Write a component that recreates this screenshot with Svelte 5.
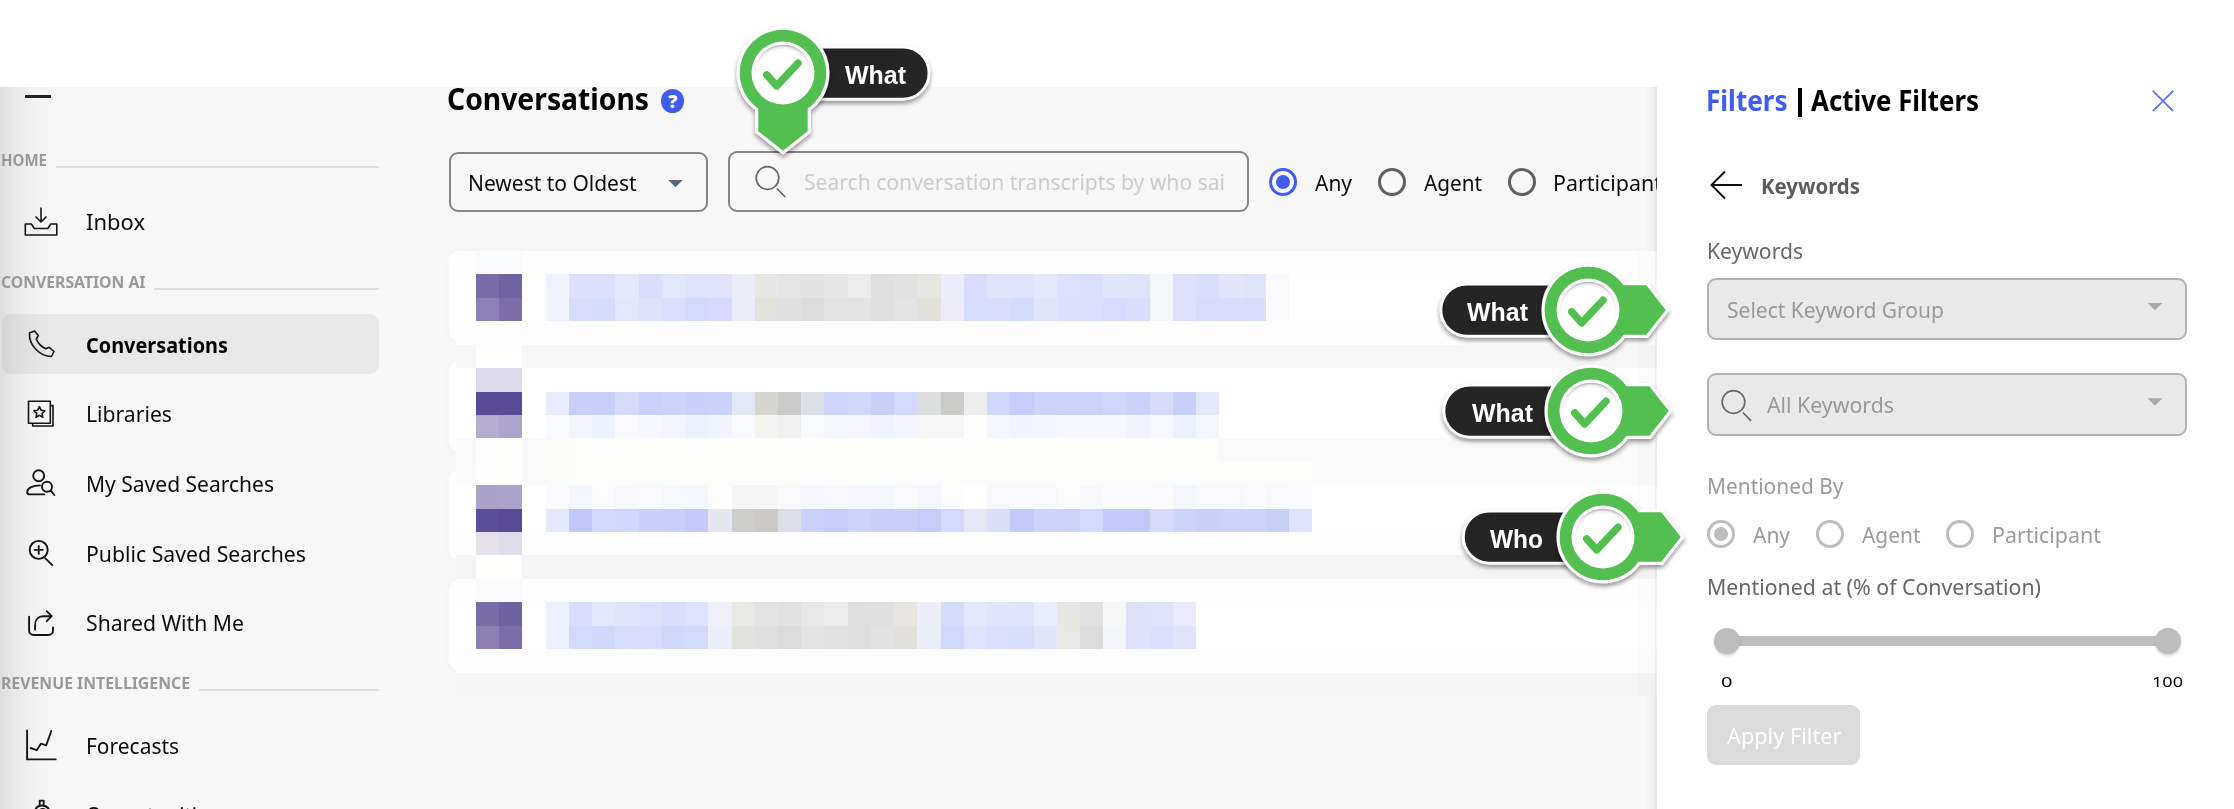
<script>
  // Condenses a line of text to a given width in pixels.
  function fit(node, width) {
    const natural = node.getBoundingClientRect().width;
    node.style.transform = `scaleX(${width / natural})`;
    node.style.marginRight = `${width - natural}px`;
  }

  const sections = [
    { title: 'HOME', w: 46, items: [{ label: 'Inbox', w: 59, icon: 'inbox' }] },
    {
      title: 'CONVERSATION AI', w: 144.5,
      items: [
        { label: 'Conversations', w: 142, icon: 'phone', active: true },
        { label: 'Libraries', w: 86, icon: 'library' },
        { label: 'My Saved Searches', w: 188, icon: 'person' },
        { label: 'Public Saved Searches', w: 220, icon: 'zoom' },
        { label: 'Shared With Me', w: 158, icon: 'share' }
      ]
    },
    {
      title: 'REVENUE INTELLIGENCE', w: 189,
      items: [
        { label: 'Forecasts', w: 93, icon: 'chart' },
        { label: 'Opportunities', w: 132, icon: 'bag' }
      ]
    }
  ];

  const icons = {
    inbox: 'M21 5.5V20M15.5 14.5L21 20l5.500-5.500M5.300 22h6l3 4.500h13.500l3-4.500h6v11h-31.500z',
    phone: 'M9.500 9L14.500 7l3.800 4.500L16.300 15.200C18 19 21.500 23 25.800 24.800L29.200 23.300 34 27.500 31.500 32.500C20 32.500 8.500 21 9.500 9z',
    library: 'M8.500 7.300h21.800v21.900H8.500zM30.300 11.600H33V32H12.700V29.200M19.400 12.600l1.700 3.600 3.800.500-2.800 2.700.700 3.900-3.400-1.900-3.400 1.900.700-3.900-2.800-2.700 3.800-.500z',
    person: 'M24.200 12.700a5.500 5.500 0 1 1-11 0a5.500 5.500 0 1 1 11 0M20 22.400C12 22.400 7.200 25.500 7.200 29C7.200 30.800 8 31.400 9.500 31.400H24.300M32 23.700a5 5 0 1 1-10 0a5 5 0 1 1 10 0M30.600 27.400L34.300 32',
    zoom: 'M27.700 16.900a9 9 0 1 1-18 0a9 9 0 1 1 18 0M14.700 16.900h8M18.700 12.900v8M25.300 25.400l7 6.700',
    share: 'M9.100 13.800V27.500a4.500 4.500 0 0 0 4.500 4.500H28.500a4.500 4.500 0 0 0 4.500-4.500V24.500M15.100 26.500V22c0-5 3-8.700 8-8.700h8.600M26.700 8.200l5 5-5 5',
    chart: 'M7.100 5.400V34.400H35.700M10.700 23l6 2.200L20.900 18.700l5.300 1.600L31.300 6',
    bag: 'M19.700 9.800V5.600h4v4.200M14.500 17c1-4 3.500-6.500 7.300-6.500 3.800 0 6.500 2 7.700 5M20 15c1.500-1.500 4-1.300 5.500 0'
  };

  // Mosaic rows, one colour per tile; '' leaves the tile in the row's base colour.
  const C = 23.23;
  const R = 23.42;
  const s = (t) => t.trim().split(/\s+/);
  const mosaic = [
    { base: '#fefefe', cells: s('fafbfe fafbfe') },
    { base: '#ffffff', cells: s('786da8 7063a3 fffffd eff2ff dce0fd dce0fd e4e8fc dadefc e0e6fb dfe2fc e1e3fd ededf8 e6e6e3 e4e4e4 e2e2e2 e6e6e6 ececec dfdfdf e1e1e1 e5e5e2 ecedf8 d9dcfd dfe3fc dfe4fc e5e8fd dde1fd dadffc dfe5fb dfe4fb f4f6fa dde1fb d9defc e3e3fb dce3fb f9faff') },
    { base: '#ffffff', cells: s('8c80b7 7d6eab fffffd eff2ff d7dcfb d5dbfa e2e6fc dde2fc dadffd d2d9fa d7dafc ececf8 e1e1dd e0e0e0 dcdcdc e3e3e3 e3e3e3 dfdfdf e3e3e3 e1e0dd ebecf8 d5dcfc d9ddfc d4dcfb e2e4fb dce0fc d9dffc d8dbfd d9defc f4f6fa dde1fb d8dcfb d9dcfc d8dcfb f8faff') },
    { base: '#fdfdfd', cells: s('fcfcfd fcfcfd') },
    { base: '#f6f6f6', cells: s('fffffd fffffd') },
    { base: '#ffffff', cells: s('dcd9e8 dcd9e8') },
    { base: '#ffffff', cells: s('594a95 594a95 fffffd e8ebfe c8cff8 c8cff8 d6daf8 cad1fa cdd4fa c9d0fa cad2fa e4e7f6 d5d4d0 cbcbc9 dcdee8 cdd5fc d1d7f9 c8cff9 d3d9fa dcdddd cbcbc9 ededed d1d7fa c6cdfa ccd4f9 cbd3f9 ccd3f9 cfd6fa cad2fa d6daf9 c8d0f9 e4e8fd') },
    { base: '#ffffff', cells: s('b5add0 ada4cb ffffff fafbff f2f4ff eef1ff f8faff f5f6ff f2f4ff edf0ff f1f3ff f8f9ff f3f3f0 f0f0f0 f8f9fb f3f5ff f5f5ff eff2ff f2f4ff f6f6f6 f6f6f6 fdfdfd f4f6ff f1f4ff f2f4ff f5f6ff f5f6ff f5f6ff f0f2ff f7f8ff eceffe f3f5ff') },
    { base: '#f9f9f9', cells: ['fefefe', 'fefefd', 'f9f9f9', 'fafaf9', ...Array(28).fill('fcfcfa')] },
    { base: '#fafafa', cells: ['fefefe', 'fefefd', 'f9f9f9', 'fafaf9', ...Array(32).fill('fcfcfa')] },
    { base: '#ffffff', cells: s('aba2ca aba3cb ffffff fafbff f3f6ff fbfcff f6f8fe f8faff f6f8ff f5f7ff fdfdfe f5f5f5 f5f5f5 f9f9fb f5f6ff f7f8ff f5f6ff f3f5ff f7f9ff f5f5ff fcfdff ffffff f7f9fe f8faff f7f9ff fafcff f6f8fe f9fbff f9fbff f8faff f3f5ff f7f9ff f7f9ff f9fbff f7f9ff f9fbff') },
    { base: '#ffffff', cells: s('5b4e98 594a95 ffffff e4e8fc bfc8f8 d2d8fa d1d7fa c9d1fa c7cffa c3cafb e4e5f1 cdcdcb cccac8 dcdde9 cad1fa c6ccfa ccd4fa c8d0fa c8d0fa c5ccfa d3d9fb e5e7f4 d9dff5 c2caf9 ccd4fa ccd3fa d3d9fb c2caf9 c1c9f9 d5dafb cdd4fa c9d1f8 ccd3f9 ccd3f9 c6cff8 dee2fa') },
    { base: '#fefefe', cells: s('e4e1ed e0ddea') },
    { base: '#f5f5f5', cells: s('fffffd fffffd') },
    { base: '#fefefe', cells: s('fafafd fafafd') },
    { base: '#ffffff', cells: s('796da8 6f62a1 fffffd ecefff d9defc e4e6fd dfe4fb dce1fc d9defc dde2fd efeff9 e8e8e5 e3e3e3 e1e1e1 e7e7e7 ededed dfdfdf e0e0e0 e7e5e2 ededf7 d5dcfa e4e7fd e1e4fb dfe3fb eaedff e6e6e3 e1e1e1 f7f7f7 dce2fa dee2fb e9eafe') },
    { base: '#ffffff', cells: s('8b7fb4 7b6eaa ffffff ecefff d3d9fb cfd7fb d8dcfc d8dcfd d1d7fb d3d9fb ebedf8 e1e1dd dfdfdf dbdbdb e3e3e3 e2e2e2 dedede e0e3e2 e1e0dd ebeef8 d1d8fb dfe2fa dadffd d8dffd e1e4fa e7e7e4 dcdcdc f4f5f8 dce2fb d9dffd e0e4fb') },
    { base: '#fdfdfd', cells: [] },
    { base: '#f5f5f5', cells: [] }
  ];

  const markers = [
    { x: 782.7, y: 73.3, dir: 'down', pill: [0, 144.6], label: 'What', tx: 62, w: 61 },
    { x: 1587.7, y: 310, dir: 'right', pill: [-145.7, 0], label: 'What', tx: -120.5, w: 61 },
    { x: 1590.7, y: 411.4, dir: 'right', pill: [-145.7, 0], label: 'What', tx: -119, w: 61 },
    { x: 1603.2, y: 537.3, dir: 'right', pill: [-138.2, 0], label: 'Who', tx: -113.5, w: 53 }
  ];
</script>

{#snippet radio(label, width, on)}
  <label class="radio"><i class:on></i><span class="t" use:fit={width}>{label}</span></label>
{/snippet}

{#snippet magnifier()}
  <svg class="magnifier" width="34" height="34" viewBox="0 0 34 34">
    <circle cx="15.500" cy="14" r="11.300" /><path d="M24.800 24.500l8.400 8.300" />
  </svg>
{/snippet}

<div class="page">
  <div class="app">
    <nav>
      <div class="burger"></div>
      {#each sections as sec}
        <h3><span class="t" use:fit={sec.w}>{sec.title}</span><hr /></h3>
        <ul>
          {#each sec.items as item}
            <li class:active={item.active}>
              <svg width="40" height="40" viewBox="0 0 40 40"><path d={icons[item.icon]} class:thick={['person', 'zoom', 'share', 'chart', 'bag'].includes(item.icon)} /></svg>
              <span class="t" use:fit={item.w}>{item.label}</span>
            </li>
          {/each}
        </ul>
      {/each}
    </nav>

    <main>
      <h1><span class="t" use:fit={202}>Conversations</span><b class="help">?</b></h1>
      <div class="toolbar">
        <div class="sort"><span class="t" use:fit={168.5}>Newest to Oldest</span><i class="caret"></i></div>
        <div class="search">{@render magnifier()}<span class="t" use:fit={421}>Search conversation transcripts by who sai</span></div>
        <div class="radios">
          {@render radio('Any', 37, true)}
          {@render radio('Agent', 58, false)}
          {@render radio('Participant', 109, false)}
        </div>
      </div>
      <div class="list">
        {#each Array(4) as _}<div class="card"></div>{/each}
        <svg class="mosaic" width="1202" height="445" shape-rendering="crispEdges">
          {#each mosaic as row, r}
            <rect x="0" y={r * R} width="1202" height={R + 0.3} fill={row.base} />
            {#each row.cells as c, i}
              <rect x={20 + i * C} y={r * R} width={C} height={R} fill={'#' + c} />
            {/each}
          {/each}
          <rect x="1182" y="0" width="20" height="446" fill="#000" opacity=".01" />
          <rect x="1199" y="0" width="3" height="446" fill="#000" opacity=".04" />
        </svg>
      </div>
    </main>

    <aside>
      <header>
        <h2><span class="t blue" use:fit={81.500}>Filters</span><span class="bar"></span><span class="t" use:fit={168}>Active Filters</span></h2>
        <svg width="22" height="22" viewBox="0 0 22 22"><path d="M.800.800l20.400 20.400M21.200.800L.800 21.200" /></svg>
      </header>
      <div class="back">
        <svg width="34" height="30" viewBox="0 0 34 30"><path d="M32 15H1.500M15 1.500L1.500 15 15 28.500" /></svg>
        <span class="t" use:fit={99}>Keywords</span>
      </div>
      <div class="label first"><span class="t" use:fit={96}>Keywords</span></div>
      <div class="field"><span class="t" use:fit={217}>Select Keyword Group</span><i class="caret"></i></div>
      <div class="field second">{@render magnifier()}<span class="t" use:fit={127}>All Keywords</span><i class="caret"></i></div>
      <div class="label muted"><span class="t" use:fit={136.500}>Mentioned By</span></div>
      <div class="radios muted">
        {@render radio('Any', 37, true)}
        {@render radio('Agent', 58.500, false)}
        {@render radio('Participant', 109, false)}
      </div>
      <div class="label at"><span class="t" use:fit={334}>Mentioned at (% of Conversation)</span></div>
      <div class="slider"><i></i><div class="track"></div><i></i></div>
      <div class="scale"><span class="t" use:fit={11.500}>0</span><span class="t" use:fit={31}>100</span></div>
      <button><span class="t" use:fit={114.500}>Apply Filter</span></button>
    </aside>
  </div>

  {#each markers as m}
    <div class="marker" style="left:{m.x}px;top:{m.y}px">
      <svg width="340" height="200" viewBox="-170 -85 340 200">
        <g class="drop">
          <rect class="pill" x={m.pill[0] - 1.500} y="-26.100" width={m.pill[1] - m.pill[0] + 3} height="52.300" rx="26.100" />
        </g>
        <g class="drop">
          <g transform={m.dir === 'down' ? 'rotate(90)' : null}>
            <path class="body-line" d="M35.500-24.700H58.300L77.800 0 58.300 24.700H35.500A43.300 43.300 0 1 1 35.500-24.700z" />
            <path class="body" d="M35.500-24.700H58.300L77.800 0 58.300 24.700H35.500A43.300 43.300 0 1 1 35.500-24.700z" />
          </g>
        </g>
        <circle r="31.500" fill="#fff" />
        <circle r="28.300" fill="url(#inset)" />
        <path class="check" d="M-16.300 1.800L-6.300 12.900L15-9.800" />
        <defs>
          <radialGradient id="inset" cx=".5" cy=".56" r=".56">
            <stop offset=".84" stop-color="#fff" /><stop offset=".92" stop-color="#eee" /><stop offset="1" stop-color="#a8a8a8" />
          </radialGradient>
        </defs>
      </svg>
      <span class="t tag" style="left:{m.tx}px" use:fit={m.w}>{m.label}</span>
    </div>
  {/each}
</div>

<style>
  :global(body) { margin: 0; background: #fff; }
  .page { position: relative; width: 2234px; height: 809px; box-sizing: border-box; padding-top: 87px; overflow: hidden; background: #fff; font: 22px/30px "Noto Sans", sans-serif; color: #0c0c0c; }
  .app { display: flex; height: 722px; overflow: hidden; }
  .t { display: inline-block; white-space: nowrap; transform-origin: 0 50%; flex: none; }
  svg { display: block; flex: none; fill: none; overflow: visible; }
  h1, h2, h3, ul { margin: 0; padding: 0; }

  nav { width: 380px; flex: none; background: linear-gradient(90deg, rgba(0,0,0,.1), rgba(0,0,0,.055) 14px, rgba(0,0,0,.018) 34px, transparent 58px), #f7f7f7; }
  .burger { width: 26px; height: 2.500px; margin: 8px 0 32px 25px; background: #222; }
  h3 { display: flex; align-items: center; height: 62.400px; padding-left: .500px; font-size: 16.500px; font-weight: 700; color: #999; }
  h3 .t { margin-top: -2px; }
  h3 hr { flex: 1; height: 2px; margin: 12px 1px 0 9px; border: 0; background: #dedede; }
  ul { display: flex; flex-direction: column; gap: 9.600px; list-style: none; }
  li { display: flex; align-items: center; gap: 26px; box-sizing: border-box; height: 60px; margin: 0 1px 0 1.500px; padding-left: 18.500px; border-radius: 9px; }
  li .t { margin-top: -1px; }
  li.active { background: rgba(0,0,0,.057); font-weight: 700; color: #000; }
  li path { stroke: #151515; stroke-width: 1.600; stroke-linejoin: round; }
  li path.thick { stroke-width: 1.900; stroke-linecap: round; }

  main { position: relative; flex: 1; min-width: 0; overflow: hidden; padding-left: 68.500px; background: #f7f7f7; }
  main::after { content: ''; position: absolute; top: 0; right: 0; width: 12px; height: 100%; background: linear-gradient(90deg, transparent, rgba(0,0,0,.035) 70%, rgba(0,0,0,.09)); }
  h1 { display: flex; align-items: center; height: 24px; gap: 12px; margin-left: -1.500px; font-size: 30px; line-height: 24px; color: #000; }
  .help { width: 23.400px; height: 23.400px; margin-top: 4px; border-radius: 50%; background: #405df0; color: #fff; font-size: 18px; line-height: 24px; text-align: center; }
  .toolbar { display: flex; align-items: flex-end; margin-top: 39.500px; width: 1300px; }
  .sort, .search { display: flex; align-items: center; box-sizing: border-box; border: 2px solid #858585; border-radius: 9px; }
  .sort { width: 259.500px; height: 60px; padding: 0 23px 0 17px; margin-right: 20px; justify-content: space-between; }
  .search { width: 521px; height: 61.500px; padding-left: 21.500px; margin-right: 20px; color: #ccc; }
  .caret { width: 15px; height: 7.500px; margin-top: 3px; background: #586874; clip-path: polygon(0 0, 100% 0, 50% 100%); }
  .magnifier { margin-right: 18px; }
  .magnifier circle, .magnifier path { stroke: #666; stroke-width: 1.700; }
  .radios { display: flex; align-items: center; height: 60px; }
  .radio { display: flex; align-items: center; gap: 17.500px; }
  .radio i { display: grid; place-items: center; box-sizing: border-box; width: 28px; height: 28px; border: 3px solid #606060; border-radius: 50%; flex: none; }
  .radio i.on { border-color: #405df0; }
  .radio i.on::after { content: ''; width: 14px; height: 14px; border-radius: 50%; background: #405df0; }
  .toolbar .radios .radio:nth-child(2) { margin-left: 26.500px; }
  .toolbar .radios .radio:nth-child(3) { margin-left: 26px; }
  .list { position: relative; z-index: 1; display: flex; flex-direction: column; gap: 19.600px; margin-top: 39px; }
  .card { height: 90px; border-radius: 10px; background: #fff; box-shadow: 0 2px 14px rgba(0,0,0,.025); }
  .mosaic { position: absolute; left: 7.500px; top: 0; overflow: hidden; }

  aside { width: 577px; flex: none; box-sizing: border-box; padding: 0 47px 0 50px; background: #fff; color: #666; }
  header { display: flex; justify-content: space-between; height: 30px; }
  header h2 { display: flex; align-items: center; font-size: 28.500px; line-height: 27px; height: 27px; color: #000; }
  header svg { margin: 3px 13.500px 0 0; stroke: #5970f2; stroke-width: 1.700; }
  .blue { color: #405df0; margin-left: -1px; }
  .bar { width: 4px; height: 29px; margin: 3px 9px 0 10px; background: #000; }
  .back { display: flex; align-items: center; height: 30px; margin: 53px 0 0 3px; gap: 17px; font-weight: 700; color: #5c5c5c; }
  .back svg { stroke: #111; stroke-width: 1.900; }
  .label { height: 30px; }
  .label.first { margin-top: 34.500px; }
  .field { display: flex; align-items: center; box-sizing: border-box; height: 62px; margin-top: 13px; padding: 0 22.500px 0 18px; border: 2px solid #b2b2b2; border-radius: 9px; background: #e9e9e9; color: #999; }
  .field .caret { margin: -4px 0 0 auto; background: #aaa; }
  .field .magnifier { margin: 1px 15px 0 7px; }
  .field.second { height: 63px; margin-top: 33px; padding-left: 2px; }
  .label.muted { margin-top: 34.500px; color: #9b9b9b; }
  .radios.muted { height: 28px; margin-top: 20px; color: #9b9b9b; }
  .radios.muted i, .radios.muted i.on { border-color: #bdbdbd; }
  .radios.muted i.on::after { background: #bdbdbd; }
  .radios.muted .radio:nth-child(2) { margin-left: 26.500px; }
  .radios.muted .radio:nth-child(3) { margin-left: 26px; }
  .label.at { margin-top: 23px; }
  .slider { display: flex; align-items: center; height: 26px; margin: 27px 6.500px 0 7px; }
  .slider i { z-index: 1; width: 25.500px; height: 25.500px; border-radius: 50%; background: #bdbdbd; box-shadow: 0 2px 3px rgba(0,0,0,.16); }
  .track { flex: 1; height: 10px; margin: 0 -4px; background: #bdbdbd; }
  .scale { display: flex; justify-content: space-between; height: 20px; margin: 18px 4.500px 0 14px; font-size: 14px; line-height: 20px; color: #000; }
  button { display: block; box-sizing: border-box; width: 153px; height: 60px; margin-top: 13px; padding: 0 0 0 20px; border: 0; border-radius: 9px; background: #dbdbdb; color: #fff; font: inherit; text-align: left; }

  .marker { position: absolute; z-index: 5; width: 0; height: 0; }
  .marker svg { position: absolute; left: -170px; top: -85px; }
  .drop { filter: drop-shadow(0 3px 2px rgba(0,0,0,.38)); }
  .pill { fill: #252525; stroke: #fff; stroke-width: 3px; }
  .body-line { stroke: #fff; stroke-width: 6.400px; fill: #fff; }
  .body { fill: #52bf50; }
  .check { stroke: #52bf50; stroke-width: 7.400px; stroke-linecap: round; stroke-linejoin: round; }
  .tag { position: absolute; top: -13px; font: 700 25px/30px "Liberation Sans", Arial, sans-serif; color: #fff; }
</style>
